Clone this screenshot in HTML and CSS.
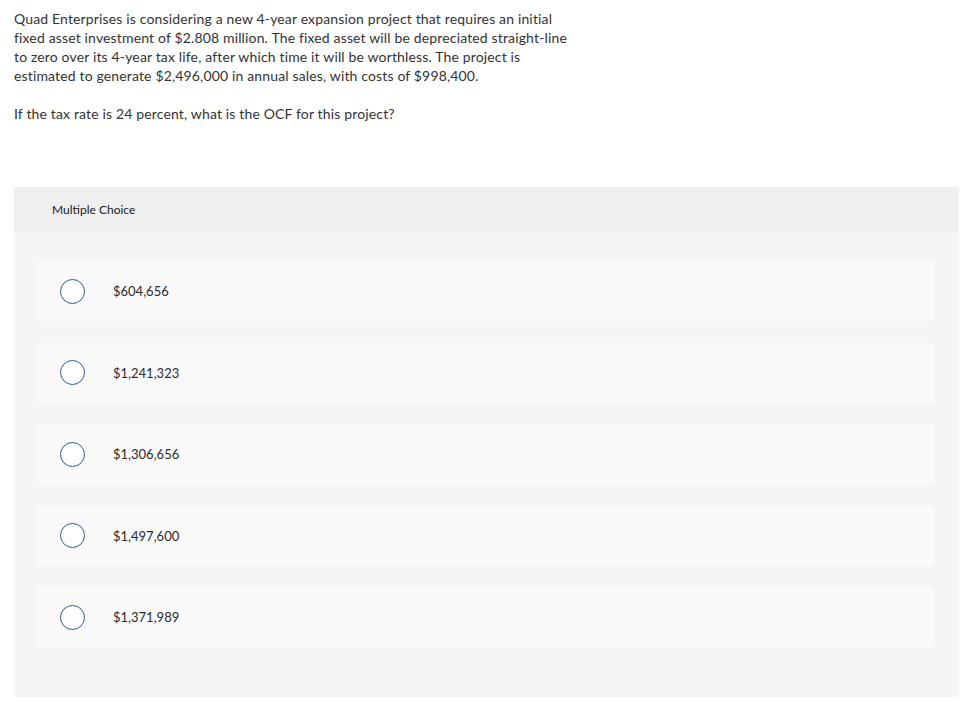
FILE: index.html
```html
<!DOCTYPE html>
<html>
<head>
<meta charset="utf-8">
<link rel="stylesheet" href="styles.css">
</head>
<body>
<div class="page">
  <div class="question">
    <p>Quad Enterprises is considering a new 4-year expansion project that requires an initial fixed asset investment of $2.808 million. The fixed asset will be depreciated straight-line to zero over its 4-year tax life, after which time it will be worthless. The project is estimated to generate $2,496,000 in annual sales, with costs of $998,400.</p>
    <p>If the tax rate is 24 percent, what is the OCF for this project?</p>
  </div>
  <div class="panel">
    <div class="panel-header">Multiple Choice</div>
    <div class="options">
      <div class="option"><span class="radio"></span><span class="label">$604,656</span></div>
      <div class="option"><span class="radio"></span><span class="label">$1,241,323</span></div>
      <div class="option"><span class="radio"></span><span class="label">$1,306,656</span></div>
      <div class="option"><span class="radio"></span><span class="label">$1,497,600</span></div>
      <div class="option"><span class="radio"></span><span class="label">$1,371,989</span></div>
    </div>
  </div>
</div>
</body>
</html>
```

FILE: styles.css
```css
* { box-sizing: border-box; }
html, body { margin: 0; padding: 0; background: #fff; }
body {
  font-family: "Lato", "Liberation Sans", sans-serif;
  color: #333;
}
.page {
  padding: 9px 4px 0 14px;
}
.question {
  width: 566px;
  font-size: 14px;
  letter-spacing: 0.15px;
  line-height: 19px;
}
.question p { margin: 0 0 19px 0; }
.panel {
  margin-top: 64px;
  background: #f5f5f5;
  border-radius: 3px;
  padding-bottom: 50px;
}
.panel-header {
  background: #efefef;
  height: 45px;
  padding-left: 38px;
  display: flex;
  align-items: center;
  font-size: 12px;
  color: #222;
  border-radius: 3px 3px 0 0;
}
.options {
  padding: 29px 25px 0 23px;
  display: flex;
  flex-direction: column;
  gap: 21.5px;
}
.option {
  background: #fafafa;
  height: 60px;
  border-radius: 3px;
  display: flex;
  align-items: center;
  padding-left: 23px;
}
.radio {
  width: 25px;
  height: 25px;
  border: 1.5px solid #2c5d8f;
  border-radius: 50%;
  background: #fff;
  flex: none;
}
.label {
  margin-left: 28px;
  font-size: 13px;
  color: #2a2a2a;
}
```
